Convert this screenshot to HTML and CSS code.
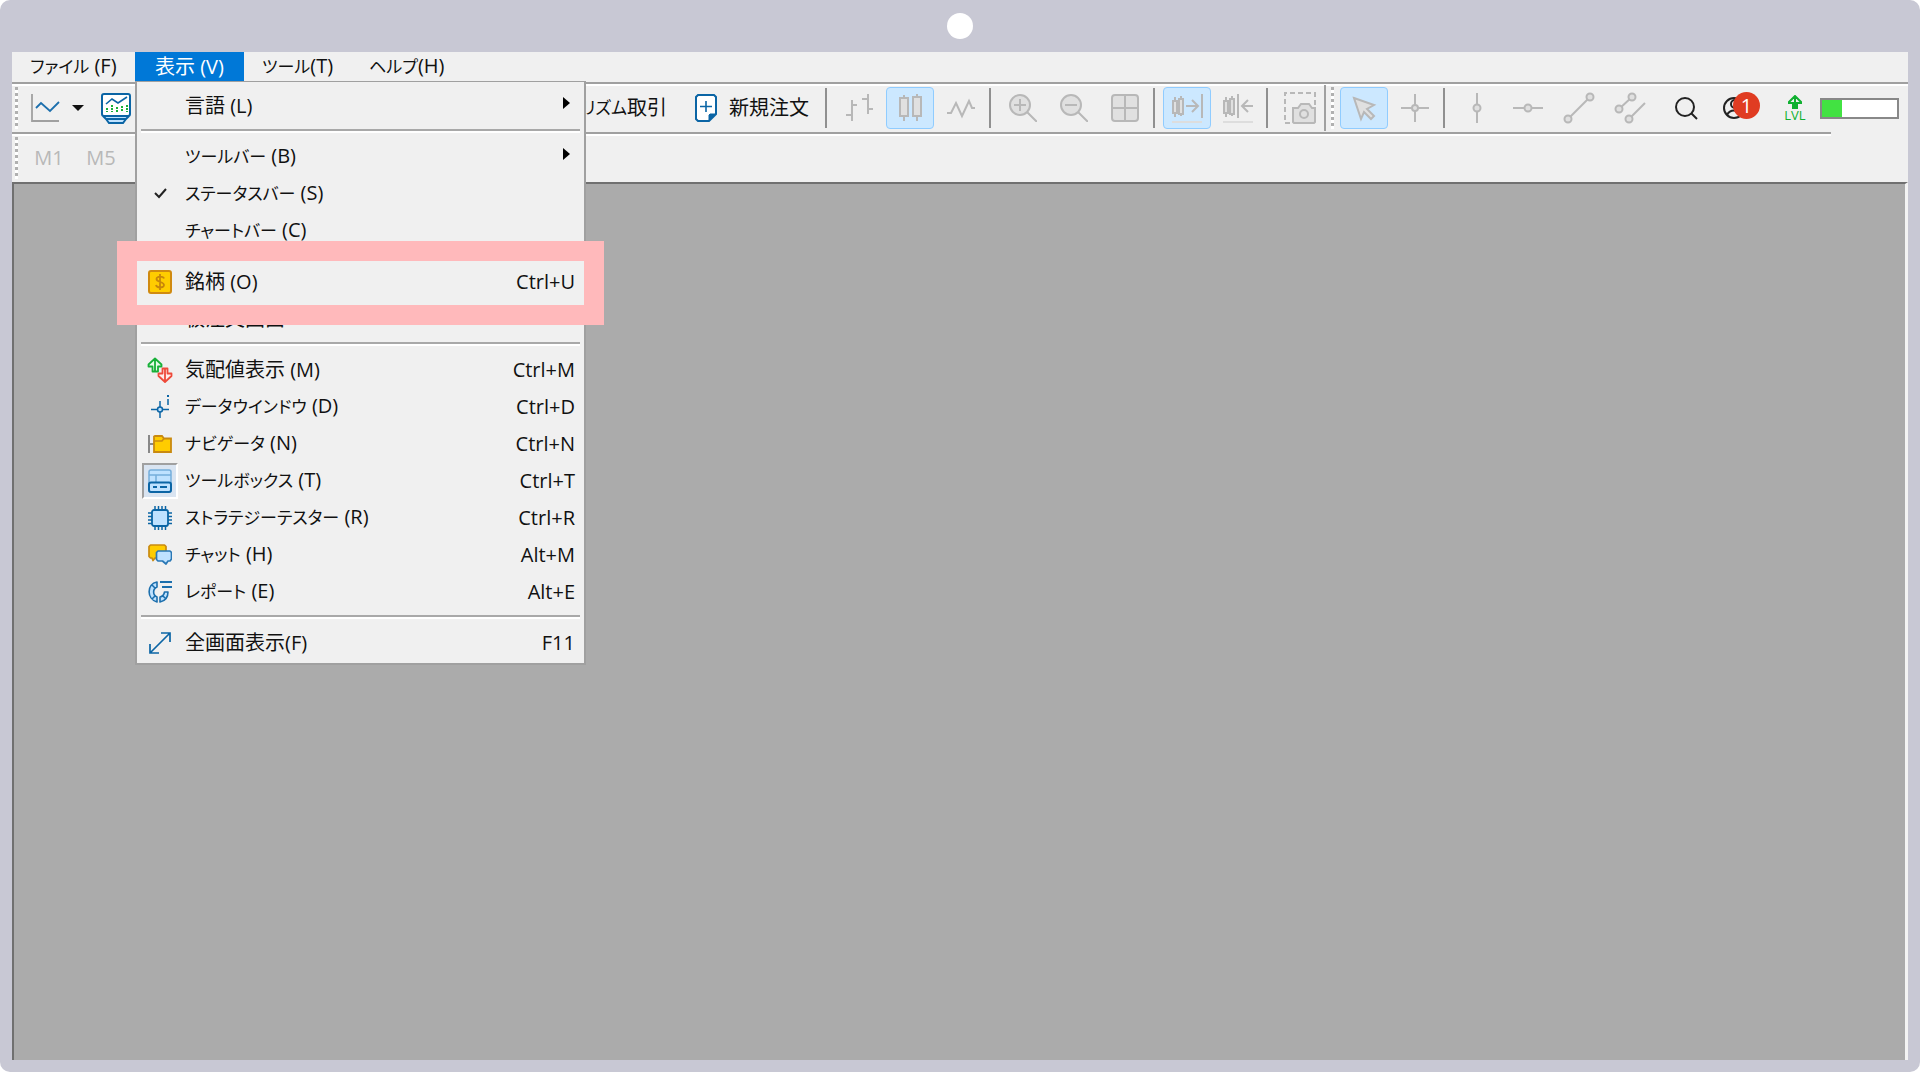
FILE: index.html
```html
<!DOCTYPE html>
<html lang="ja">
<head>
<meta charset="utf-8">
<meta name="viewport" content="width=device-width, initial-scale=1">
<title>MetaTrader 5</title>
<link rel="stylesheet" href="styles.css">
</head>
<body>
<div class="frame">
  <header class="frame-top"><span class="camera-dot"></span></header>
  <main class="app">
    <nav class="menubar">
      <button class="menu-title first"><span class="kana">ファイル</span> (F)</button>
      <div class="menu-open">
        <button class="menu-title selected" aria-expanded="true">表示 (V)</button>
        <div class="dropdown" role="menu">
          <button class="item" role="menuitem"><span class="mark"></span><span class="label">言語 (L)</span><span class="arrow"></span></button>
          <hr class="rule">
          <button class="item" role="menuitem"><span class="mark"></span><span class="label"><span class="kana">ツールバー</span> (B)</span><span class="arrow"></span></button>
          <button class="item" role="menuitem"><span class="mark"><svg width="24" height="24" viewBox="0 0 24 24" fill="none" stroke="#222" stroke-width="2"><path d="M7 11l4 4 7-8"/></svg></span><span class="label"><span class="kana">ステータスバー</span> (S)</span></button>
          <button class="item" role="menuitem"><span class="mark"></span><span class="label"><span class="kana">チャートバー</span> (C)</span></button>
          <hr class="rule">
          <button class="item highlighted" role="menuitem"><span class="mark"><svg width="24" height="24" viewBox="0 0 24 24" fill="none"><rect x="1" y="1" width="22" height="22" rx="2" fill="#fc0" stroke="#d08a10" stroke-width="2"/><path d="M16 8.500C15.500 6.500 8.500 5.500 8.500 9c0 3.500 7.500 2.500 7.500 6 0 3.500-7.500 3-8 0M12 4v16" stroke="#c8860a" stroke-width="1.800"/></svg></span><span class="label">銘柄 (O)</span><kbd>Ctrl+U</kbd></button>
          <button class="item" role="menuitem"><span class="mark"></span><span class="label">板注文画面</span></button>
          <hr class="rule">
          <button class="item" role="menuitem"><span class="mark"><svg width="26" height="26" viewBox="0 0 26 26" fill="none" stroke-width="1.800" stroke-linejoin="round"><path d="M8 1.500l6.500 6v2H11v5H5.500v-5h-4v-2zM8 2v12" stroke="#17b038" fill="#e9fbe9"/><path d="M18 25l-6.500-6v-2.500h4v-5h5v5h4V19zM18 12v12" stroke="#ee4a3a" fill="#ffeceb"/></svg></span><span class="label">気配値表示 (M)</span><kbd>Ctrl+M</kbd></button>
          <button class="item" role="menuitem"><span class="mark"><svg width="24" height="24" viewBox="0 0 24 24" fill="none" stroke="#0b65a5" stroke-width="1.500"><path d="M12 6v6M12 17v6M3 14.500h6M15 14.500h6M20 4v6"/><circle cx="12" cy="14.500" r="2.500" fill="#bfe2ff"/><path d="M20 0v2" stroke-width="2"/></svg></span><span class="label"><span class="kana">データウインドウ</span> (D)</span><kbd>Ctrl+D</kbd></button>
          <button class="item" role="menuitem"><span class="mark"><svg width="24" height="24" viewBox="0 0 24 24" fill="none"><path d="M1 3v18M1 12h5" stroke="#888" stroke-width="2"/><path d="M6 20V4.500L7 4h7l2 2.500h7V20z" fill="#fc0" stroke="#c98a10" stroke-width="1.800"/><path d="M6 9h8l2-2.500" stroke="#c98a10" stroke-width="1.500"/></svg></span><span class="label"><span class="kana">ナビゲータ</span> (N)</span><kbd>Ctrl+N</kbd></button>
          <button class="item" role="menuitem"><span class="mark pressed"><svg width="24" height="24" viewBox="0 0 24 24" fill="#bfe2ff"><rect x="1" y="1" width="22" height="22" rx="2" stroke="#76aedb" stroke-width="1.500"/><path d="M1 6h22M8 6v7" stroke="#76aedb" stroke-width="1.500"/><rect x="1" y="13.500" width="22" height="9.500" rx="2" stroke="#0b65a5" stroke-width="2"/><path d="M5 18h4M12 18h7" stroke="#0b65a5" stroke-width="1.800"/></svg></span><span class="label"><span class="kana">ツールボックス</span> (T)</span><kbd>Ctrl+T</kbd></button>
          <button class="item" role="menuitem"><span class="mark"><svg width="24" height="24" viewBox="0 0 24 24" stroke="#0b65a5"><path d="M7 0v24M10.500 0v24M14 0v24M17.500 0v24M0 7h24M0 10.500h24M0 14h24M0 17.500h24" stroke-width="1.500"/><rect x="4" y="4" width="16" height="16" rx="2" fill="#bfe2ff" stroke-width="1.800"/></svg></span><span class="label"><span class="kana">ストラテジーテスター</span> (R)</span><kbd>Ctrl+R</kbd></button>
          <button class="item" role="menuitem"><span class="mark"><svg width="24" height="24" viewBox="0 0 24 24" stroke-width="1.700" stroke-linejoin="round"><path d="M2.500 2h14L18 3.500V13l-1.500 2H7l-2 2.500L4 15H2.500L1 13.500v-10z" fill="#fc0" stroke="#c98a10"/><path d="M10 8h12l1.500 1.500V16L22 18h-2l-2 3-3.500-3H10l-1.500-1.500v-7z" fill="#bfe2ff" stroke="#2a78b5"/></svg></span><span class="label"><span class="kana">チャット</span> (H)</span><kbd>Alt+M</kbd></button>
          <button class="item" role="menuitem"><span class="mark"><svg width="24" height="24" viewBox="0 0 24 24" fill="#bfe2ff" stroke="#1c6fad" stroke-width="1.600" stroke-linejoin="round"><path d="M9 2C-1.500 4-1.500 19 9 22v-5C4.500 15 4.500 9 9 7zM4 5l3 3M4 19l3-3"/><path d="M12 22v-5c3-.5 4-2 4.500-5H20c0 6-3 9-8 10zM15 16l3 3"/><path d="M12 2h12M14 7h10" stroke-width="2"/></svg></span><span class="label"><span class="kana">レポート</span> (E)</span><kbd>Alt+E</kbd></button>
          <hr class="rule">
          <button class="item" role="menuitem"><span class="mark"><svg width="24" height="24" viewBox="0 0 24 24" fill="none" stroke="#0b65a5" stroke-width="1.700"><path d="M2 22L22 2M13 2h9v9M2 13v9h9"/></svg></span><span class="label">全画面表示(F)</span><kbd>F11</kbd></button>
        </div>
      </div>
      <button class="menu-title"><span class="kana">ツール</span>(T)</button>
      <button class="menu-title"><span class="kana">ヘルプ</span>(H)</button>
    </nav>

    <div class="toolbar main-bar">
      <div class="group start">
        <span class="grip"></span>
        <button class="tool chart" aria-label="チャート"><svg width="30" height="30" viewBox="0 0 30 30" fill="none" stroke-width="1.800"><path d="M2 1v27h27" stroke="#a0a0a0"/><path d="M6 15l5-5 9 8 9-9" stroke="#1c6fad" /></svg><span class="caret"></span></button>
        <button class="tool monitor" aria-label="銘柄モニター"><svg width="32" height="32" viewBox="0 0 32 32" fill="none" stroke="#0b65a5" stroke-width="2"><path d="M3 24l3 3h20l3-3M6 27l3 4h14l3-4" fill="#bfe2ff"/><rect x="2" y="2" width="28" height="22" rx="2" fill="#fff"/><path d="M6 12l6-5 6 4 9-6" stroke-width="1.600"/><path d="M7 16v4M12 13v7M17 15v5M22 14v6M27 13v7" stroke="#17b038" stroke-dasharray="2 1"/></svg></button>
        <button class="text-tool algo"><span class="kana">アルゴリズム</span>取引</button>
        <button class="text-tool"><svg width="22" height="28" viewBox="0 0 22 28" fill="none" stroke="#0b65a5" stroke-width="2"><path d="M3 1h16l2 2v17l-7 7H3l-2-2V3z" fill="#fff"/><path d="M14 27v-6l1-1h6z" fill="#0b65a5" stroke-width="1"/><path d="M11 7v11M5 12.500h12" stroke-width="1.600"/></svg>新規注文</button>
      </div>
      <div class="group grow">
        <span class="split"></span>
        <button class="tool" aria-label="バーチャート"><svg width="28" height="28" viewBox="0 0 28 28" class="dim"><path d="M7 6v21M1 21h6M7 11h5M23 0v20M17 5h6M23 15h5"/></svg></button>
        <button class="tool active" aria-label="ローソク足"><svg width="28" height="28" viewBox="0 0 28 28" class="dim"><path d="M8 1v26M21 0v27"/><path d="M4 4h8v18H4zM17 3h8v19h-8z"/></svg></button>
        <button class="tool" aria-label="ラインチャート"><svg width="28" height="28" viewBox="0 0 28 28" class="dim"><path d="M0 19h4l5-10 6 13 7-15 3 7h3" fill="none"/></svg></button>
        <span class="split"></span>
        <button class="tool" aria-label="ズームイン"><svg width="28" height="28" viewBox="0 0 28 28" class="dim"><circle cx="11" cy="11" r="10"/><path d="M11 5v12M5 11h12M18 18l10 10"/></svg></button>
        <button class="tool" aria-label="ズームアウト"><svg width="28" height="28" viewBox="0 0 28 28" class="dim"><circle cx="11" cy="11" r="10"/><path d="M5 11h12M18 18l10 10"/></svg></button>
        <button class="tool" aria-label="ウィンドウを並べる"><svg width="28" height="28" viewBox="0 0 28 28" class="dim"><rect x="1" y="1" width="26" height="26" rx="3"/><path d="M14 1v26M1 14h26"/></svg></button>
        <span class="split"></span>
        <button class="tool active" aria-label="自動スクロール"><svg width="32" height="30" viewBox="0 0 32 30" class="dim"><path d="M4 4v20M10 3v20"/><path d="M2 8h4v12H2zM8 6h4v15H8z"/><path d="M15 13h12M21 7l6 6-6 6M31 1v24" fill="none"/><path d="M1 29h30" stroke="#ddd"/></svg></button>
        <button class="tool" aria-label="チャートシフト"><svg width="32" height="30" viewBox="0 0 32 30" class="dim"><path d="M4 4v20M10 3v20"/><path d="M2 8h4v12H2zM8 6h4v15H8z"/><path d="M31 13H20M26 7l-6 6 6 6M16 1v24" fill="none"/><path d="M1 29h30" stroke="#ddd"/></svg></button>
        <span class="split"></span>
        <button class="tool" aria-label="スクリーンショット"><svg width="32" height="32" viewBox="0 0 32 32" class="dim"><path d="M6 31H1V1h30v12" fill="none" stroke-dasharray="5 3"/><path d="M9 16h5l3-4h8l3 4h3v14l-1 1H10l-1-1z"/><circle cx="20" cy="22" r="4"/></svg></button>
        <span class="band-edge"></span>
        <span class="grip inner"></span>
        <button class="tool active" aria-label="カーソル"><svg width="28" height="28" viewBox="0 0 28 28" class="dim"><path d="M4 4l20 7-7 4 7 7-3 3-7-7-3 7z"/></svg></button>
        <button class="tool" aria-label="十字線"><svg width="28" height="28" viewBox="0 0 28 28" class="dim"><path d="M14 0v28M0 14h28"/><circle cx="14" cy="14" r="3"/></svg></button>
        <span class="split"></span>
        <button class="tool" aria-label="垂直線"><svg width="32" height="32" viewBox="0 0 32 32" class="dim"><path d="M16 1v30"/><circle cx="16" cy="16" r="3.500"/></svg></button>
        <button class="tool" aria-label="水平線"><svg width="32" height="32" viewBox="0 0 32 32" class="dim"><path d="M1 16h30"/><circle cx="16" cy="16" r="3.500"/></svg></button>
        <button class="tool" aria-label="トレンドライン"><svg width="32" height="32" viewBox="0 0 32 32" class="dim"><path d="M5 27L27 5"/><circle cx="5" cy="27" r="3.500"/><circle cx="27" cy="5" r="3.500"/></svg></button>
        <button class="tool" aria-label="チャネル"><svg width="32" height="32" viewBox="0 0 32 32" class="dim"><path d="M5 17L18 5M15 27l16-16"/><circle cx="5" cy="17" r="3.500"/><circle cx="18" cy="5" r="3.500"/><circle cx="15" cy="27" r="3.500"/></svg></button>
      </div>
      <div class="group end">
        <button class="tool" aria-label="検索"><svg width="24" height="24" viewBox="0 0 24 24" fill="none" stroke="#222" stroke-width="2"><circle cx="11" cy="11" r="9"/><path d="M17 17l6 6"/></svg></button>
        <button class="tool account" aria-label="アカウント"><svg width="24" height="24" viewBox="0 0 24 24" fill="none" stroke="#222" stroke-width="2"><circle cx="12" cy="12" r="10"/><circle cx="13" cy="8" r="4"/><path d="M5 19c3-6 11-6 14 0"/></svg><span class="badge">1</span></button>
        <div class="level"><svg width="14" height="14" viewBox="0 0 14 14" fill="none" stroke="#10b030" stroke-width="2"><path d="M1 7l6-6 6 6v1H9v5H5V8H1zM7 2v11"/></svg><span>LVL</span></div>
        <div class="meter"><span class="meter-fill"></span></div>
      </div>
    </div>

    <div class="toolbar time-bar">
      <span class="grip"></span>
      <button class="period">M1</button>
      <button class="period">M5</button>
    </div>
    <section class="workspace" aria-label="チャート"></section>
  </main>
</div>
</body>
</html>
```

FILE: styles.css
```css
* { box-sizing: border-box; }

body {
  margin: 0;
  background: #fff;
  color: #111;
  font: 20px/24px "Open Sans", "Noto Sans CJK JP", sans-serif;
}

button {
  margin: 0;
  padding: 0;
  border: 0;
  background: none;
  color: inherit;
  font: inherit;
  white-space: nowrap;
}

svg { display: block; flex: none; }

.kana {
  font-size: 17px;
  font-feature-settings: "palt";
}

.frame {
  display: flex;
  flex-direction: column;
  min-height: 100vh;
  padding: 0 12px 12px;
  border-radius: 10px;
  background: #c8c8d4;
}

.frame-top {
  display: flex;
  align-items: center;
  justify-content: center;
  height: 52px;
}

.camera-dot {
  width: 26px;
  height: 26px;
  border-radius: 50%;
  background: #fff;
}

.app {
  display: flex;
  flex: 1;
  flex-direction: column;
  background: #f0f0f0;
}

/* Menu bar and its open menu */
.menubar {
  display: flex;
  height: 30px;
}

.menu-title {
  height: 29px;
  padding: 0 18px;
}

.first { width: 123px; }

.menu-open { position: relative; }

.selected {
  width: 109px;
  background: #0078d7;
  color: #fff;
}

.dropdown {
  position: absolute;
  z-index: 2;
  top: 29px;
  left: 0;
  width: 451px;
  padding: 5px 0 2px;
  border: 2px solid #a0a0a0;
  border-top-width: 1px;
  background: #f0f0f0;
}

.item {
  position: relative;
  display: flex;
  align-items: center;
  width: 100%;
  height: 37px;
  padding: 0 9px 0 5px;
  text-align: left;
}

.mark {
  display: flex;
  align-items: center;
  justify-content: center;
  width: 36px;
  height: 36px;
}

.pressed {
  border: 2px solid;
  border-color: #a0a0a0 #fff #fff #a0a0a0;
  background: #d9e4f1;
}

.label {
  flex: 1;
  margin-left: 7px;
}

kbd { font: inherit; }

.arrow {
  margin: 0 5px 6px 0;
  border: 6px solid transparent;
  border-right: 0;
  border-left: 7px solid #000;
}

.rule {
  height: 4px;
  margin: 5px 4px;
  border: 0;
  border-top: 2px solid #a8a8a8;
  border-bottom: 2px solid #fff;
}

.highlighted { z-index: 1; }

.highlighted::after {
  position: absolute;
  inset: -22px -20px -25px;
  border: 20px solid #ffb9bb;
  content: "";
}

/* Toolbars */
.toolbar {
  display: flex;
  align-items: center;
  height: 50px;
  padding-left: 3px;
  border-top: 2px solid #a0a0a0;
  box-shadow: inset 0 2px #fff;
}

.time-bar { margin-right: 77px; }

.group {
  display: flex;
  align-items: center;
  gap: 3px;
}

.start {
  flex: none;
  width: 807px;
}

.grow { flex: 1; }
.end { gap: 0; margin-right: 9px; }

.grip {
  width: 3px;
  height: 42px;
  background: repeating-linear-gradient(#b0b0b0 0 3px, #fff 3px 6px);
}

.inner { margin: 0 3px 0 2px; }

.tool {
  display: flex;
  flex: none;
  align-items: center;
  justify-content: center;
  width: 48px;
  height: 42px;
}

.chart {
  gap: 12px;
  width: 72px;
}

.monitor { width: 40px; }

.caret {
  border: 6px solid transparent;
  border-top-color: #111;
  border-bottom: 0;
}

.active {
  border: 1px solid #90ccff;
  border-radius: 4px;
  background: #cce8ff;
}

.dim {
  fill: #e0e0e0;
  stroke: #b8b8b8;
  stroke-width: 2;
}

.text-tool {
  display: flex;
  align-items: center;
  gap: 12px;
  height: 42px;
}

.algo {
  gap: 0;
  justify-content: flex-end;
  width: 160px;
  margin: 0 25px 0 368px;
}

.split {
  width: 2px;
  height: 40px;
  margin: 0 5px 0 1px;
  background: #909090;
}

.split:first-child { margin-left: 3px; }

.band-edge {
  width: 2px;
  height: 46px;
  margin-left: -3px;
  background: #a0a0a0;
}

.account { position: relative; }

.badge {
  position: absolute;
  top: 5px;
  right: -2px;
  width: 27px;
  height: 27px;
  border-radius: 50%;
  background: #e03c22;
  color: #fff;
  line-height: 27px;
}

.level {
  display: flex;
  flex-direction: column;
  align-items: center;
  width: 48px;
  margin-left: 13px;
  color: #10b030;
  font-size: 13px;
  line-height: 13px;
}

.meter {
  width: 79px;
  height: 21px;
  margin-left: 1px;
  border: 2px solid #888;
  background: #fff;
}

.meter-fill {
  display: block;
  width: 26%;
  height: 100%;
  background: #42e242;
}

.period {
  width: 52px;
  color: #b8b8b8;
}

.period:first-of-type { margin-left: 5px; }

.workspace {
  flex: 1;
  border: solid;
  border-width: 2px 3px 0 2px;
  border-color: #707070 #f4f4f4 transparent #707070;
  background: #ababab;
}
```
